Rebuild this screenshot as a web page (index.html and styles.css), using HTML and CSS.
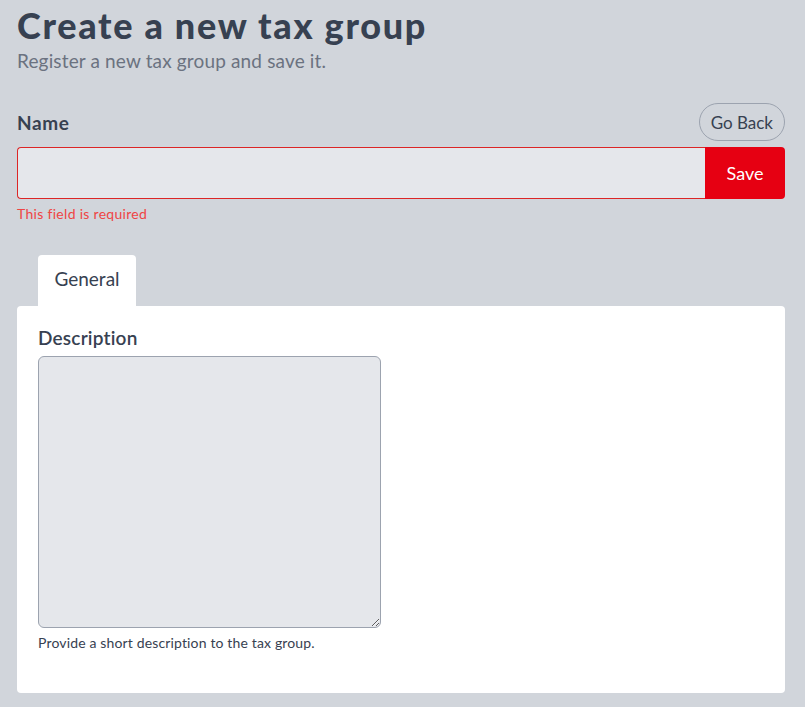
FILE: index.html
```html
<!DOCTYPE html>
<html lang="en">
<head>
    <meta charset="UTF-8">
    <meta name="viewport" content="width=device-width, initial-scale=1.0">
    <title>Create a new tax group</title>
    <link rel="stylesheet" href="styles.css">
</head>
<body>
    <div class="page">
        <div class="header">
            <h1>Create a new tax group</h1>
            <p class="subtitle">Register a new tax group and save it.</p>
        </div>

        <form class="tax-form">
            <div class="name-head">
                <label class="name-label" for="name">Name</label>
                <button type="button" class="back-button">Go Back</button>
            </div>
            <div class="name-row">
                <input type="text" id="name" class="name-input">
                <button type="submit" class="save-button">Save</button>
            </div>
            <p class="field-error">This field is required</p>

            <div class="tabs">
                <div class="tab active">General</div>
            </div>
            <div class="panel">
                <label class="field-label" for="description">Description</label>
                <textarea id="description" class="description"></textarea>
                <p class="field-help">Provide a short description to the tax group.</p>
            </div>
        </form>
    </div>
</body>
</html>
```

FILE: styles.css
```css
body, html {
    margin: 0;
    padding: 0;
    background-color: #d1d5db;
    font-family: Lato, "Open Sans", sans-serif;
    color: #374151;
}

.page {
    width: 768px;
    margin-left: 17px;
}

.header h1 {
    margin: 0;
    padding-top: 2px;
    font-size: 36px;
    line-height: 46px;
    font-weight: 900;
    letter-spacing: 1.7px;
    color: #374151;
}

.subtitle {
    margin: 0;
    font-size: 19px;
    line-height: 26px;
    letter-spacing: 0.15px;
    color: #6b7280;
}

.name-head {
    display: flex;
    justify-content: space-between;
    align-items: center;
    margin-top: 29px;
}

.name-label {
    font-size: 19px;
    font-weight: 700;
    letter-spacing: 0.6px;
}

.back-button {
    font-family: inherit;
    font-size: 17px;
    color: #374151;
    background: transparent;
    border: 1px solid #9ca3af;
    border-radius: 999px;
    height: 38px;
    padding: 0 11px;
}

.name-row {
    display: flex;
    margin-top: 6px;
    height: 52px;
}

.name-input {
    flex: 1;
    box-sizing: border-box;
    background-color: #e5e7eb;
    border: 1px solid #dc2626;
    border-right: none;
    border-radius: 4px 0 0 4px;
    outline: none;
    font-family: inherit;
    font-size: 16px;
}

.save-button {
    width: 80px;
    background-color: #e60012;
    color: white;
    border: none;
    border-radius: 0 4px 4px 0;
    font-family: inherit;
    font-size: 18px;
}

.field-error {
    margin: 6px 0 0;
    font-size: 14px;
    line-height: 18px;
    letter-spacing: 0.3px;
    color: #ef4444;
}

.tabs {
    display: flex;
    margin-top: 32px;
    padding-left: 21px;
}

.tab {
    background-color: white;
    border-radius: 4px 4px 0 0;
    width: 98px;
    height: 51px;
    line-height: 48px;
    text-align: center;
    font-size: 19px;
}

.panel {
    background-color: white;
    border-radius: 4px;
    padding: 20px 21px 40px;
    height: 327px;
}

.field-label {
    display: block;
    font-size: 19px;
    font-weight: 600;
    line-height: 24px;
    letter-spacing: 0.2px;
}

.description {
    display: block;
    box-sizing: border-box;
    width: 343px;
    height: 272px;
    margin-top: 6px;
    background-color: #e5e7eb;
    border: 1px solid #9ca3af;
    border-radius: 6px;
    outline: none;
}

.field-help {
    margin: 6px 0 0;
    font-size: 14px;
    line-height: 18px;
    letter-spacing: 0.15px;
}
```
